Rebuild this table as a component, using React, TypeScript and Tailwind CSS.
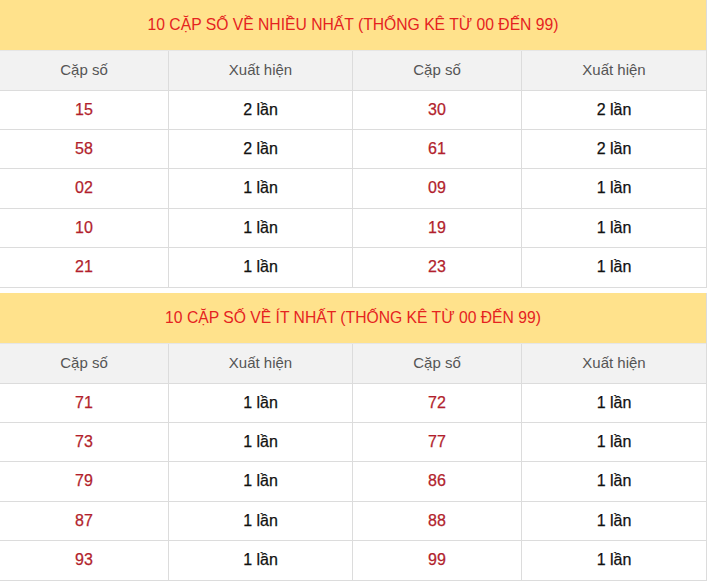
import React from 'react';

type Pair = { num: string; count: number };

const mostPairs: Pair[] = [
  { num: '15', count: 2 }, { num: '30', count: 2 },
  { num: '58', count: 2 }, { num: '61', count: 2 },
  { num: '02', count: 1 }, { num: '09', count: 1 },
  { num: '10', count: 1 }, { num: '19', count: 1 },
  { num: '21', count: 1 }, { num: '23', count: 1 },
];

const leastPairs: Pair[] = [
  { num: '71', count: 1 }, { num: '72', count: 1 },
  { num: '73', count: 1 }, { num: '77', count: 1 },
  { num: '79', count: 1 }, { num: '86', count: 1 },
  { num: '87', count: 1 }, { num: '88', count: 1 },
  { num: '93', count: 1 }, { num: '99', count: 1 },
];

const cols = 'grid grid-cols-[168px_184px_169px_185px]';

const StatTable: React.FC<{ title: string; pairs: Pair[] }> = ({ title, pairs }) => {
  const rows: Pair[][] = [];
  for (let i = 0; i < pairs.length; i += 2) rows.push([pairs[i], pairs[i + 1]]);

  return (
    <div className="w-[707px] border-r border-b border-[#dcdcdc]">
      <div className="h-[51px] bg-[#ffe28c] border-b border-[#e6e6e6] flex items-center justify-center text-[15.7px] text-[#e5231f]">
        {title}
      </div>
      <div className={`${cols} h-[40px] bg-[#f2f2f2] border-b border-[#dcdcdc] text-[15px] text-[#555]`}>
        {['Cặp số', 'Xuất hiện', 'Cặp số', 'Xuất hiện'].map((h, i) => (
          <div key={i} className={`flex items-center justify-center ${i > 0 ? 'border-l border-[#dcdcdc]' : ''}`}>
            {h}
          </div>
        ))}
      </div>
      {rows.map((row, r) => (
        <div key={r} className={`${cols} h-[39.2px] ${r < rows.length - 1 ? 'border-b border-[#dcdcdc]' : ''} text-[16px] [-webkit-text-stroke:0.25px]`}>
          {row.map((p, j) => (
            <React.Fragment key={j}>
              <div className={`flex items-center justify-center text-[#b21f2d] ${j > 0 ? 'border-l border-[#dcdcdc]' : ''}`}>
                {p.num}
              </div>
              <div className="flex items-center justify-center border-l border-[#dcdcdc] text-[#111]">
                {p.count} lần
              </div>
            </React.Fragment>
          ))}
        </div>
      ))}
    </div>
  );
};

export default function App() {
  return (
    <div className="w-[709px] h-[583px] bg-white flex flex-col gap-[5px] font-['Liberation_Sans',Arial,sans-serif]">
      <StatTable title="10 CẶP SỐ VỀ NHIỀU NHẤT (THỐNG KÊ TỪ 00 ĐẾN 99)" pairs={mostPairs} />
      <StatTable title="10 CẶP SỐ VỀ ÍT NHẤT (THỐNG KÊ TỪ 00 ĐẾN 99)" pairs={leastPairs} />
    </div>
  );
}
